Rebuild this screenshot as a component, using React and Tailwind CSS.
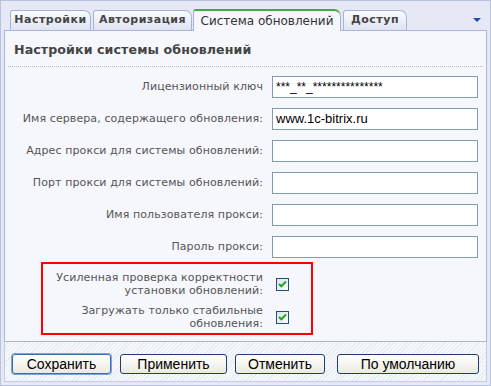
import React from 'react';

const labelFont = { fontFamily: '"DejaVu Sans", Verdana, sans-serif' };
const inputFont = { fontFamily: '"Liberation Sans", Arial, sans-serif' };

const fields = [
  { label: 'Лицензионный ключ', value: '***_**_***************', small: true },
  { label: 'Имя сервера, содержащего обновления:', value: 'www.1c-bitrix.ru' },
  { label: 'Адрес прокси для системы обновлений:', value: '' },
  { label: 'Порт прокси для системы обновлений:', value: '' },
  { label: 'Имя пользователя прокси:', value: '' },
  { label: 'Пароль прокси:', value: '' },
];

const checks = [
  ['Усиленная проверка корректности', 'установки обновлений:'],
  ['Загружать только стабильные', 'обновления:'],
];

const Tab = ({ label, width, className = '' }) => (
  <div
    className={`h-[20px] flex items-center justify-center border border-b-0 border-[#a5b3d6] rounded-tl-[3px] rounded-tr-[7px] bg-gradient-to-b from-[#fafbfe] to-[#dfe3f1] text-[11px] font-bold tracking-[0.5px] text-[#444] ${width} ${className}`}
    style={labelFont}
  >
    {label}
  </div>
);

const Checkbox = () => (
  <div className="w-[13px] h-[13px] border border-[#1c5180] bg-gradient-to-br from-[#dce2ea] to-[#fbfcfd] flex items-center justify-center">
    <svg width="9" height="8" viewBox="0 0 9 8">
      <path d="M1 4 L3.3 6.3 L8 1.5" fill="none" stroke="#22a322" strokeWidth="2" />
    </svg>
  </div>
);

const Button = ({ children, width, className = '' }) => (
  <button
    className={`h-[20px] border border-[#1e3f6e] rounded-[3px] bg-gradient-to-b from-[#ffffff] to-[#ebe9df] text-[14px] leading-none text-black ${width} ${className}`}
    style={inputFont}
  >
    {children}
  </button>
);

export default function App() {
  return (
    <div className="w-[491px] h-[386px] bg-[#e6e9f5] border border-[#b9c3e0] flex flex-col px-[3px] pb-[3px]">
      {/* tabs */}
      <div className="h-[29px] flex items-end pl-[6px]">
        <Tab label="Настройки" width="w-[81px]" />
        <Tab label="Авторизация" width="w-[99px]" className="ml-[2px]" />
        <div
          className="relative z-10 -mb-px ml-[1px] w-[148px] h-[22px] flex items-center justify-center border-x border-t-2 border-x-[#a5b3d6] border-t-[#3cae3c] rounded-tl-[3px] rounded-tr-[7px] bg-[#f5f7fc] text-[12px] text-[#333] pb-[1px]"
          style={labelFont}
        >
          Система обновлений
        </div>
        <Tab label="Доступ" width="w-[64px]" className="ml-[2px]" />
        <div className="ml-auto mr-[6px] mb-[8px] w-0 h-0 border-x-[4px] border-x-transparent border-t-[4px] border-t-[#1d4f9c]" />
      </div>

      {/* panel */}
      <div className="flex-1 bg-[#f5f7fc] border border-[#a9b6d8] flex flex-col">
        <div className="mx-[3px] pt-[11px] pb-[8px] pl-[6px] border-b border-dotted border-[#b8bcc6]">
          <h1 className="text-[12.6px] leading-[16px] font-bold text-[#444] tracking-[0.1px]" style={labelFont}>
            Настройки системы обновлений
          </h1>
        </div>

        <div className="mt-[9px] flex flex-col gap-[10px]">
          {fields.map((f) => (
            <div key={f.label} className="flex items-center h-[22px]">
              <div className="w-[258px] text-right text-[11px] tracking-[0.1px] text-[#555] whitespace-nowrap" style={labelFont}>
                {f.label}
              </div>
              <div
                className={`ml-[9px] w-[206px] h-[22px] border border-[#7f9db9] bg-white flex items-center pl-[3px] text-black ${f.small ? 'text-[12px]' : 'text-[13px]'}`}
                style={inputFont}
              >
                {f.value}
              </div>
            </div>
          ))}
        </div>

        <div className="mt-[4px] ml-[36px] w-[272px] border-2 border-[#ff0000] pt-[7px] pb-[3px] flex flex-col gap-[7px]">
          {checks.map((c) => (
            <div key={c[0]} className="flex items-center">
              <div className="w-[220px] text-right text-[11px] leading-[13px] tracking-[0.1px] text-[#555]" style={labelFont}>
                <div>{c[0]}</div>
                <div>{c[1]}</div>
              </div>
              <div className="ml-[13px]">
                <Checkbox />
              </div>
            </div>
          ))}
        </div>
      </div>

      {/* buttons */}
      <div className="h-[40px] border-x border-b border-[#c3cbe3] bg-[repeating-linear-gradient(135deg,#f6f7fb_0px,#f6f7fb_2px,#e9ebf2_2px,#e9ebf2_3px)] flex items-start pt-[12px] pl-[7px]">
        <Button width="w-[99px]" className="shadow-[0_0_0_1px_#7fa4dc] border-[#3a6bb5]">Сохранить</Button>
        <Button width="w-[107px]" className="ml-[9px]">Применить</Button>
        <Button width="w-[90px]" className="ml-[8px]">Отменить</Button>
        <Button width="w-[142px]" className="ml-[12px]">По умолчанию</Button>
      </div>
    </div>
  );
}
